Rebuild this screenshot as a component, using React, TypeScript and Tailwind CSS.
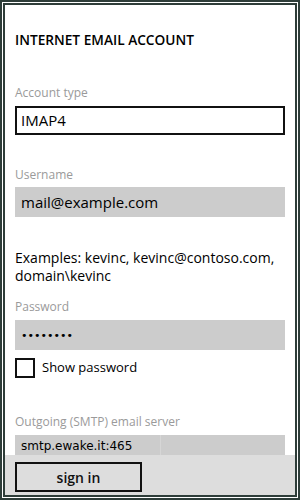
import React from "react";

const FONT = "font-['Open_Sans',sans-serif]";

function Label({ children, className = "" }: { children: React.ReactNode; className?: string }) {
  return <div className={`text-[12px] leading-[16px] text-[#9a9a9a] ${className}`}>{children}</div>;
}

export default function App(): React.ReactElement {
  return (
    <div className={`h-[500px] w-[300px] border-2 border-[#2e3d39] bg-white ${FONT}`}>
      <div className="h-full border border-white">
        <div className="flex h-full flex-col border-2 border-[#2e3d39]">
          <main className="flex-1 overflow-hidden px-[10px] pt-[25px] text-black">
            <h1 className="text-[13.7px] font-semibold leading-[20px]">INTERNET EMAIL ACCOUNT</h1>

            <Label className="mt-[35px]">Account type</Label>
            <div className="mt-[5px] flex h-[29px] items-center border-2 border-[#111] px-[4px] text-[15px]">
              IMAP4
            </div>

            <Label className="mt-[32px]">Username</Label>
            <div className="mt-[4px] flex h-[30px] items-center bg-[#cccccc] px-[6px] text-[15px]">
              mail@example.com
            </div>

            <p className="mt-[32px] text-[14px] leading-[18px]">
              Examples: kevinc, kevinc@contoso.com,
              <br />
              domain\kevinc
            </p>

            <Label className="mt-[14px]">Password</Label>
            <div className="mt-[5px] flex h-[30px] items-center bg-[#cccccc] px-[6px] pt-[2px] font-['DejaVu_Sans',sans-serif] text-[11px]">
              ••••••••
            </div>

            <label className="mt-[8px] flex h-[20px] items-center gap-[7px]">
              <span className="h-[20px] w-[20px] border-2 border-[#111] bg-white" />
              <span className="text-[13px]">Show password</span>
            </label>

            <Label className="mt-[36px]">Outgoing (SMTP) email server</Label>
            <div className="mt-[5px] flex h-[30px] bg-[#cccccc]">
              <div className="w-[146px] border-r border-[#d6d6d6] px-[6px] pt-[3px] font-['DejaVu_Sans',sans-serif] text-[12px] leading-[16px]">
                smtp.ewake.it:465
              </div>
            </div>
          </main>

          <footer className="h-[40px] bg-[#dddddd] px-[10px] pt-[7px]">
            <button
              type="button"
              className="flex h-[30px] w-[127px] items-center justify-center border-2 border-[#111] bg-[#dddddd] text-[14px] font-semibold text-[#111]"
            >
              sign in
            </button>
          </footer>
        </div>
      </div>
    </div>
  );
}
